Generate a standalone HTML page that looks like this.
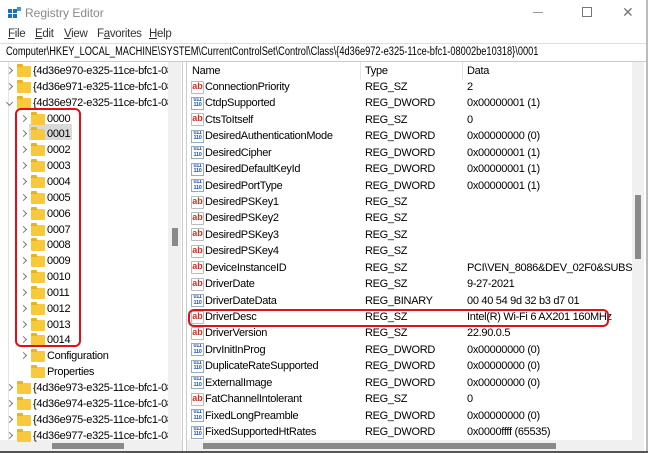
<!DOCTYPE html>
<html><head><style>
*{margin:0;padding:0;box-sizing:border-box}
body{width:648px;height:453px;overflow:hidden;background:#fff;font-family:"Liberation Sans",sans-serif;font-size:11px;letter-spacing:-0.3px;color:#000;position:relative}
.a{position:absolute;white-space:nowrap}
.t{line-height:16px}
.fold{position:absolute;width:14px;height:11px;background:#f8c93a;border-radius:1px}
.fold:before{content:"";position:absolute;left:0;top:-2px;width:6px;height:3px;background:#e9b320;border-radius:1px 1px 0 0}
.chev{position:absolute;width:5px;height:5px;border-right:1px solid #777;border-bottom:1px solid #777;transform:rotate(-45deg)}
.chd{transform:rotate(45deg)}
.ab{position:absolute;width:13px;height:13px;border:1px solid #bbb;background:#fff;color:#d03020;font-size:9px;font-weight:bold;line-height:9px;text-align:center;border-radius:1px;letter-spacing:0}
.bin{position:absolute;width:13px;height:13px;border:1px solid #9ab;background:#fff;color:#2050b0;font-size:5.5px;font-weight:bold;line-height:5.5px;text-align:center;letter-spacing:-0.3px;overflow:hidden}
</style></head><body>
<div class="a" style="left:8px;top:7px;width:13px;height:13px;">
<svg width="13" height="13"><rect x="0" y="2" width="4" height="4" fill="#1a6fc0"/><rect x="5" y="2" width="4" height="4" fill="#1a6fc0"/><rect x="0" y="7" width="4" height="4" fill="#1a6fc0"/><rect x="5" y="7" width="4" height="4" fill="#1a6fc0"/><rect x="9" y="0" width="4" height="4" fill="#3a9be0"/></svg></div>
<div class="a" style="left:25px;top:6px;font-size:12px;color:#888;letter-spacing:0">Registry Editor</div>
<div class="a" style="left:533px;top:12px;width:10px;height:1px;background:#999"></div>
<div class="a" style="left:582px;top:7px;width:10px;height:10px;border:1px solid #777"></div>
<div class="a" style="left:622px;top:4px;font-size:14px;color:#777">✕</div>
<div class="a" style="left:8px;top:28px;font-size:11.5px;color:#333"><u>F</u>ile</div>
<div class="a" style="left:35px;top:28px;font-size:11.5px;color:#333"><u>E</u>dit</div>
<div class="a" style="left:64px;top:28px;font-size:11.5px;color:#333"><u>V</u>iew</div>
<div class="a" style="left:97px;top:28px;font-size:11.5px;color:#333">F<u>a</u>vorites</div>
<div class="a" style="left:149px;top:28px;font-size:11.5px;color:#333"><u>H</u>elp</div>
<div class="a" style="left:0;top:43px;width:648px;height:19px;border-top:1px solid #ddd;border-bottom:1px solid #ccc"></div>
<div class="a" style="left:6px;top:46px;font-size:11.5px;letter-spacing:0;transform:scaleX(0.805);transform-origin:0 0">Computer\HKEY_LOCAL_MACHINE\SYSTEM\CurrentControlSet\Control\Class\{4d36e972-e325-11ce-bfc1-08002be10318}\0001</div>
<div class="a" style="left:8px;top:62px;width:1px;height:380px;background:#e4e4e4"></div>
<div class="a" style="left:168px;top:62px;width:13px;height:378px;background:#f0f0f0"></div>
<div class="a" style="left:172px;top:228px;width:6px;height:18px;background:#8a8a8a"></div>
<div class="a" style="left:182px;top:62px;width:1px;height:390px;background:#ccc"></div>
<div class="a" style="left:186px;top:62px;width:1px;height:390px;background:#ccc"></div>
<div class="a" style="left:0;top:440px;width:182px;height:11px;background:#f0f0f0"></div>
<div class="a" style="left:52px;top:443px;width:72px;height:6px;background:#8a8a8a"></div>
<div class="a" style="left:29px;top:124px;width:43px;height:16px;background:#d9d9d9"></div>
<div id="left"></div>
<div class="a" style="left:15px;top:108px;width:66px;height:239px;border:2px solid #e0101a;border-radius:6px"></div>
<div class="a" style="left:360px;top:62px;width:1px;height:18px;background:#e5e5e5"></div>
<div class="a" style="left:462px;top:62px;width:1px;height:18px;background:#e5e5e5"></div>
<div class="a t" style="left:192px;top:63px">Name</div>
<div class="a t" style="left:365px;top:63px">Type</div>
<div class="a t" style="left:467px;top:63px">Data</div>
<div class="a" style="left:632px;top:62px;width:12px;height:378px;background:#f0f0f0"></div>
<div class="a" style="left:635px;top:195px;width:6px;height:64px;background:#8a8a8a"></div>
<div class="a" style="left:187px;top:440px;width:457px;height:11px;background:#f0f0f0"></div>
<div class="a" style="left:203px;top:443px;width:353px;height:6px;background:#8a8a8a"></div>
<div class="a" style="left:646px;top:0;width:2px;height:453px;background:#bbb"></div>
<div id="right"></div>
<div class="a" style="left:188px;top:309px;width:421px;height:18px;border:2px solid #e0101a;border-radius:6px"></div>
<div class="a" style="left:0;top:451px;width:648px;height:2px;background:#555"></div>
<script>
var L=[[0,'{4d36e970-e325-11ce-bfc1-08',1],[0,'{4d36e971-e325-11ce-bfc1-08',1],[0,'{4d36e972-e325-11ce-bfc1-08',2]];
for(var i=0;i<15;i++)L.push([1,('000'+i).slice(-4),1]);
L.push([1,'Configuration',1]);L.push([1,'Properties',0]);
['973','974','975','977'].forEach(function(s){L.push([0,'{4d36e'+s+'-e325-11ce-bfc1-08',1])});
var h='';
L.forEach(function(r,i){var y=63+i*15.85;var x=r[0]?23:9;
if(r[2])h+='<div class="chev'+(r[2]==2?' chd':'')+'" style="left:'+(x-2)+'px;top:'+(y+5)+'px"></div>';
h+='<div class="fold" style="left:'+(x+8)+'px;top:'+(y+3)+'px"></div>';
h+='<div class="a t" style="left:'+(x+24)+'px;top:'+y+'px;'+(r[0]?'':'width:'+(168-x-24)+'px;overflow:hidden')+'">'+r[1]+'</div>';});
document.getElementById('left').innerHTML=h;
var R=[['ConnectionPriority','REG_SZ','2'],['CtdpSupported','REG_DWORD','0x00000001 (1)'],['CtsToItself','REG_SZ','0'],['DesiredAuthenticationMode','REG_DWORD','0x00000000 (0)'],['DesiredCipher','REG_DWORD','0x00000001 (1)'],['DesiredDefaultKeyId','REG_DWORD','0x00000001 (1)'],['DesiredPortType','REG_DWORD','0x00000001 (1)'],['DesiredPSKey1','REG_SZ',''],['DesiredPSKey2','REG_SZ',''],['DesiredPSKey3','REG_SZ',''],['DesiredPSKey4','REG_SZ',''],['DeviceInstanceID','REG_SZ','PCI\\VEN_8086&amp;DEV_02F0&amp;SUBSYS_0'],['DriverDate','REG_SZ','9-27-2021'],['DriverDateData','REG_BINARY','00 40 54 9d 32 b3 d7 01'],['DriverDesc','REG_SZ','Intel(R) Wi-Fi 6 AX201 160MHz'],['DriverVersion','REG_SZ','22.90.0.5'],['DrvInitInProg','REG_DWORD','0x00000000 (0)'],['DuplicateRateSupported','REG_DWORD','0x00000000 (0)'],['ExternalImage','REG_DWORD','0x00000000 (0)'],['FatChannelIntolerant','REG_SZ','0'],['FixedLongPreamble','REG_DWORD','0x00000000 (0)'],['FixedSupportedHtRates','REG_DWORD','0x0000ffff (65535)']];
h='';
R.forEach(function(r,i){var y=79+i*16.43;
h+=(r[1]=='REG_SZ'?'<div class="ab" style="left:191px;top:'+(y+1.5)+'px">ab</div>':'<div class="bin" style="left:191px;top:'+(y+1.5)+'px">011<br>110</div>');
h+='<div class="a t" style="left:205px;top:'+y+'px">'+r[0]+'</div><div class="a t" style="left:365px;top:'+y+'px">'+r[1]+'</div><div class="a t" style="left:467px;top:'+y+'px;width:165px;overflow:hidden">'+r[2]+'</div>';});
document.getElementById('right').innerHTML=h;
</script>
</body></html>
